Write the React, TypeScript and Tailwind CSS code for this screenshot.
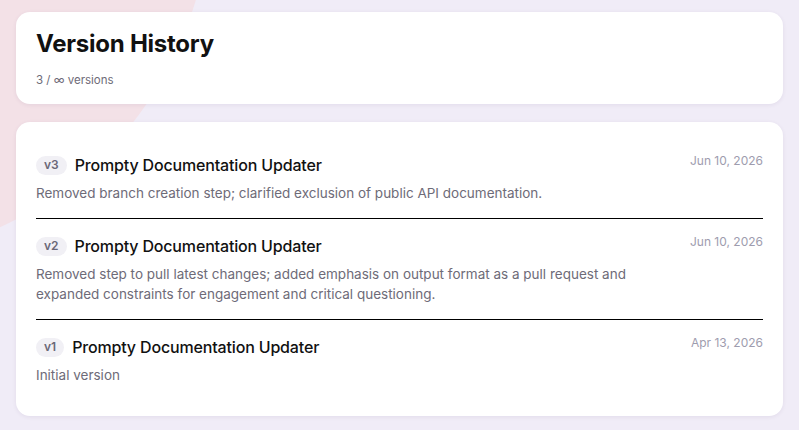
import React from "react";

const versions = [
  {
    v: "v3",
    title: "Prompty Documentation Updater",
    desc: "Removed branch creation step; clarified exclusion of public API documentation.",
    date: "Jun 10, 2026",
  },
  {
    v: "v2",
    title: "Prompty Documentation Updater",
    desc: "Removed step to pull latest changes; added emphasis on output format as a pull request and expanded constraints for engagement and critical questioning.",
    date: "Jun 10, 2026",
  },
  {
    v: "v1",
    title: "Prompty Documentation Updater",
    desc: "Initial version",
    date: "Apr 13, 2026",
  },
];

export default function App() {
  return (
    <div
      className="relative h-[430px] w-full overflow-hidden bg-[#f0ecf7]"
      style={{ fontFamily: "Inter, 'Noto Sans', sans-serif" }}
    >
      <div className="pointer-events-none absolute left-[-510px] top-[-460px] h-[720px] w-[720px] rounded-full bg-[#f3e1e7]" />
      <div className="relative flex flex-col gap-[18px] px-4 pt-3">
        <div className="rounded-[14px] bg-white px-5 pb-4 pt-4 shadow-[0_1px_4px_rgba(60,40,90,0.08)]">
          <h1 className="text-2xl font-bold leading-8 tracking-[-0.01em] text-[#111111]">
            Version History
          </h1>
          <p className="mt-[12px] text-[11.5px] leading-4 text-[#6e6b78]">3 / ∞ versions</p>
        </div>
        <div className="rounded-[14px] bg-white px-5 pb-4 pt-4 shadow-[0_1px_4px_rgba(60,40,90,0.08)]">
          {versions.map((item, i) => (
            <div
              key={item.v}
              className={
                i < versions.length - 1
                  ? "flex items-start justify-between gap-4 border-b border-black pb-[15px] pt-[15px]"
                  : "flex items-start justify-between gap-4 pb-[15px] pt-[15px]"
              }
            >
              <div className="min-w-0 flex-1">
                <div className="flex items-center gap-2">
                  <span className="flex h-[19px] items-center rounded-full bg-[#f1f0f5] px-[8px] text-xs font-semibold text-[#6b6878]">
                    {item.v}
                  </span>
                  <span className="text-base font-medium leading-6 tracking-[-0.01em] text-[#111111]">
                    {item.title}
                  </span>
                </div>
                <p className="mt-1.5 text-[13.5px] leading-5 text-[#6e6b78]">{item.desc}</p>
              </div>
              <span className="shrink-0 text-xs leading-4 text-[#9e9cae]">{item.date}</span>
            </div>
          ))}
        </div>
      </div>
    </div>
  );
}
